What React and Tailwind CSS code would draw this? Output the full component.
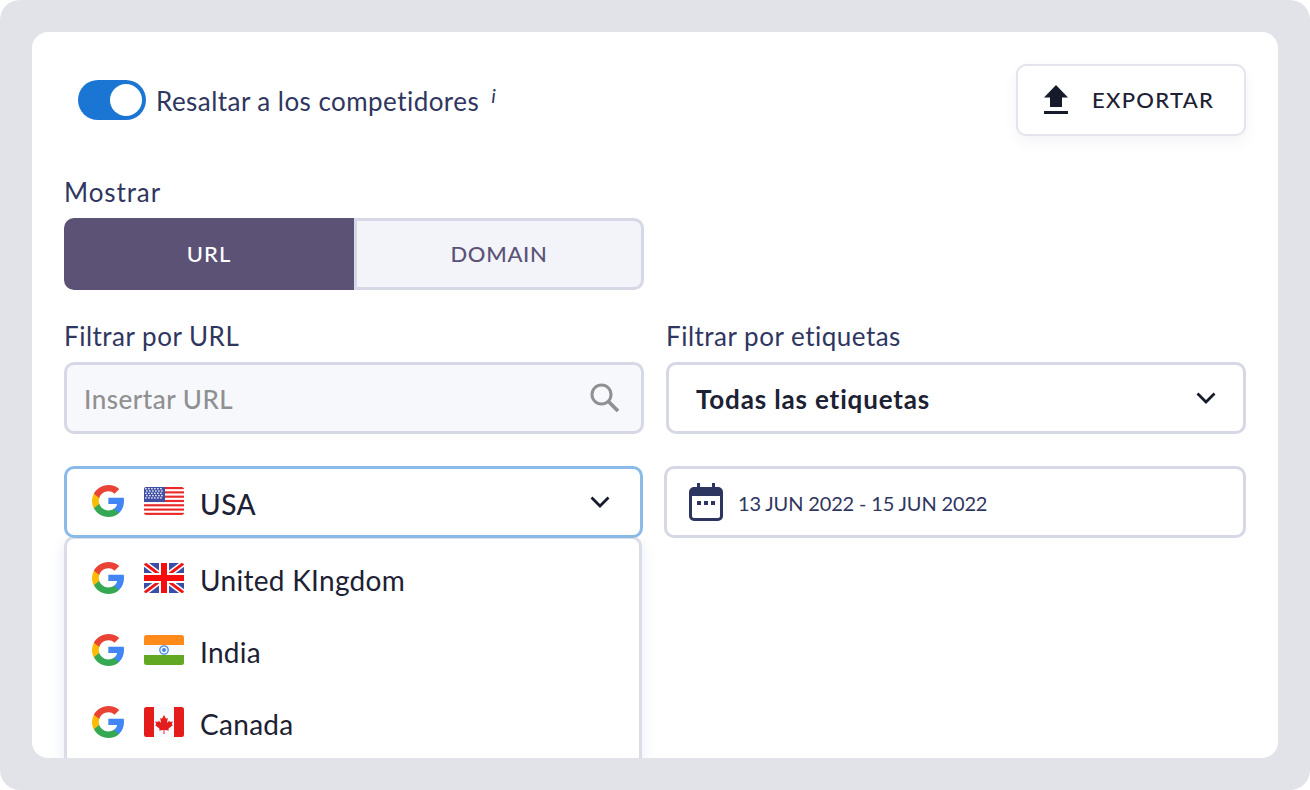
import React from "react";

const font = { fontFamily: "Lato, 'Noto Sans', sans-serif" };

function GoogleG() {
  return (
    <svg width="32" height="32" viewBox="2 3 43.100 43" className="shrink-0">
      <path fill="#4285F4" d="M45.100 24.500c0-1.600-.1-3.100-.4-4.500H24v8.500h11.800c-.5 2.700-2.100 5-4.400 6.600v5.500h7.100c4.200-3.800 6.600-9.500 6.600-16.100z" />
      <path fill="#34A853" d="M24 46c5.900 0 10.900-2 14.500-5.400l-7.100-5.500c-2 1.300-4.500 2.100-7.400 2.100-5.700 0-10.500-3.800-12.200-9H4.500v5.700C8.100 41.100 15.500 46 24 46z" />
      <path fill="#FBBC05" d="M11.800 28.700c-.4-1.300-.7-2.700-.7-4.200s.3-2.900.7-4.200v-5.700H4.500C3 17.600 2 21 2 24.500s1 6.900 2.500 9.900l7.300-5.700z" />
      <path fill="#EA4335" d="M24 11.300c3.200 0 6.100 1.100 8.400 3.300l6.300-6.300C34.900 4.800 29.900 3 24 3 15.500 3 8.100 7.900 4.500 14.600l7.300 5.700c1.700-5.200 6.500-9 12.200-9z" />
    </svg>
  );
}

function FlagUSA() {
  const stripes = [0, 2, 4, 6, 8, 10, 12];
  const stars = [];
  for (let r = 0; r < 5; r++) for (let c = 0; c < 6; c++) stars.push(<rect key={r + "-" + c} x={1.200 + c * 3 + (r % 2) * 1} y={1 + r * 2.300} width="1.400" height="1.400" fill="#fff" />);
  return (
    <svg width="40" height="28" viewBox="0 0 40 28" className="shrink-0">
      <defs><clipPath id="us"><rect width="40" height="28" rx="2.500" /></clipPath></defs>
      <g clipPath="url(#us)">
        <rect width="40" height="28" fill="#fff" />
        {stripes.map((s) => <rect key={s} y={s * 2.150} width="40" height="2.150" fill="#ea2a2a" />)}
        <rect width="21" height="15" fill="#3f4fa3" />
        {stars}
      </g>
    </svg>
  );
}

function FlagUK() {
  return (
    <svg width="40" height="30" viewBox="0 0 40 30" className="shrink-0">
      <defs><clipPath id="uk"><rect width="40" height="30" rx="2.500" /></clipPath></defs>
      <g clipPath="url(#uk)">
        <rect width="40" height="30" fill="#3b4ea6" />
        <path d="M0 0L40 30M40 0L0 30" stroke="#fff" strokeWidth="6" />
        <path d="M0 0L40 30M40 0L0 30" stroke="#f01515" strokeWidth="3" />
        <path d="M20 0V30M0 15H40" stroke="#fff" strokeWidth="10" />
        <path d="M20 0V30M0 15H40" stroke="#f60d0d" strokeWidth="6" />
      </g>
    </svg>
  );
}

function FlagIndia() {
  return (
    <svg width="40" height="30" viewBox="0 0 40 30" className="shrink-0">
      <defs><clipPath id="in"><rect width="40" height="30" rx="2.500" /></clipPath></defs>
      <g clipPath="url(#in)">
        <rect width="40" height="10" fill="#ff8a1c" />
        <rect y="10" width="40" height="10" fill="#f8fafd" />
        <rect y="20" width="40" height="10" fill="#62a823" />
        <circle cx="20" cy="15" r="4.200" fill="none" stroke="#3f86e8" strokeWidth="1.300" />
        <circle cx="20" cy="15" r="2" fill="#3f86e8" />
      </g>
    </svg>
  );
}

function FlagCanada() {
  return (
    <svg width="40" height="30" viewBox="0 0 40 30" className="shrink-0">
      <defs><clipPath id="ca"><rect width="40" height="30" rx="2.500" /></clipPath></defs>
      <g clipPath="url(#ca)">
        <rect width="40" height="30" fill="#f8fafd" />
        <rect width="10" height="30" fill="#e41c1c" />
        <rect x="30" width="10" height="30" fill="#e41c1c" />
        <path fill="#e41c1c" d="M20 8l-2 3.800-1.800-.9.800 5-2.300-2.400-.5 1.400-3-.5 1.100 3-1.300.7 4.600 3.700-.5 1.700 4.500-.6-.100 4h1l-.100-4 4.500.6-.5-1.700 4.600-3.700-1.300-.7 1.100-3-3 .5-.5-1.400-2.300 2.400.8-5-1.800.9z" />
      </g>
    </svg>
  );
}

function Chevron() {
  return (
    <svg width="20" height="12" viewBox="0 0 20 12" fill="none" className="shrink-0">
      <path d="M1.500 1.500L10 10L18.500 1.500" stroke="#161b2b" strokeWidth="2.800" />
    </svg>
  );
}

function Row({ flag, name }) {
  return (
    <div className="flex h-[72px] items-center pl-[25px]">
      <GoogleG />
      <span className="ml-[20px] flex">{flag}</span>
      <span className="ml-[16px] mt-[4px] text-[28px] tracking-[0.300px] text-[#1c2133]">{name}</span>
    </div>
  );
}

export default function App() {
  return (
    <div className="h-[790px] w-[1310px] overflow-hidden rounded-[20px] bg-[#e1e3e8] p-[32px]" style={font}>
      <div className="h-[726px] overflow-hidden rounded-[16px] bg-white px-[32px] pt-[32px]">
        <div className="flex h-[72px] items-center justify-between">
          <div className="flex items-center pl-[14px]">
            <div className="flex h-[40px] w-[68px] items-center justify-end rounded-full bg-[#1b76d3] pr-[4px]">
              <div className="h-[32px] w-[32px] rounded-full bg-white" />
            </div>
            <span className="ml-[10px] mt-[2px] text-[26px] tracking-[0.450px] text-[#2f3660]">Resaltar a los competidores</span>
            <span className="mb-[10px] ml-[12px] text-[20px] italic text-[#2f3660]">i</span>
          </div>
          <div className="flex h-[72px] w-[230px] items-center rounded-[10px] border-2 border-[#e3e4ec] bg-white pl-[25px] shadow-[0_6px_14px_rgba(60,70,120,0.06)]">
            <svg width="26" height="30" viewBox="0 0 26 30" className="shrink-0">
              <path fill="#161b2b" d="M13 0L25 12.500H19V22H7V12.500H1zM1 26H25V29H1z" />
            </svg>
            <span className="mb-[2px] ml-[23px] text-[22px] font-medium tracking-[1.300px] text-[#1c2133]">EXPORTAR</span>
          </div>
        </div>

        <div className="mt-[41px] text-[26px] leading-[30px] tracking-[0.900px] text-[#2f3660]">Mostrar</div>
        <div className="mt-[11px] flex h-[72px] w-[580px]">
          <div className="flex w-[290px] items-center justify-center rounded-l-[10px] bg-[#5b5276] pb-[2px] text-[22px] font-medium tracking-[1px] text-white">URL</div>
          <div className="flex w-[290px] items-center justify-center rounded-r-[10px] border-[3px] border-[#d6d8e5] bg-[#f3f4f9] pb-[2px] text-[22px] font-medium tracking-[0.700px] text-[#5b5276]">DOMAIN</div>
        </div>

        <div className="mt-[31px] grid grid-cols-[580px_580px] gap-x-[22px]">
          <div className="text-[26px] leading-[30px] tracking-[0.500px] text-[#2f3660]">Filtrar por URL</div>
          <div className="text-[26px] leading-[30px] tracking-[0.500px] text-[#2f3660]">Filtrar por etiquetas</div>

          <div className="mt-[11px] flex h-[72px] items-center justify-between rounded-[10px] border-[3px] border-[#d6d8e5] bg-[#f7f8fb] pl-[17px] pr-[20px]">
            <span className="mt-[2px] text-[26px] font-medium tracking-[0.500px] text-[#8f9092]">Insertar URL</span>
            <svg width="32" height="32" viewBox="0 0 32 32" fill="none" className="shrink-0">
              <circle cx="12.500" cy="12.500" r="9.500" stroke="#8f9092" strokeWidth="3" />
              <path d="M19.500 19.500L29 29" stroke="#8f9092" strokeWidth="3.800" />
            </svg>
          </div>
          <div className="mt-[11px] flex h-[72px] items-center justify-between rounded-[10px] border-[3px] border-[#d6d8e5] bg-white pl-[27px] pr-[27px]">
            <span className="mt-[2px] text-[26px] font-bold tracking-[0.850px] text-[#1c2133]">Todas las etiquetas</span>
            <Chevron />
          </div>

          <div className="relative mt-[32px] h-[72px]">
            <div className="relative z-10 mr-[1px] flex h-[72px] items-center rounded-[10px] border-[3px] border-[#8abbe8] bg-white pl-[25px] pr-[30px]">
              <span className="mb-[2px] flex"><GoogleG /></span>
              <span className="mb-[2px] ml-[20px] flex"><FlagUSA /></span>
              <span className="ml-[16px] mt-[3px] flex-1 text-[28px] font-medium tracking-[0.500px] text-[#1c2133]">USA</span>
              <Chevron />
            </div>
            <div className="absolute left-0 top-[70px] h-[300px] w-[578px] rounded-t-[10px] border-x-[3px] border-t-[3px] border-[#dadce8] bg-white pt-[3px] shadow-[0_4px_14px_rgba(100,120,180,0.15)]">
              <Row flag={<FlagUK />} name="United KIngdom" />
              <Row flag={<FlagIndia />} name="India" />
              <Row flag={<FlagCanada />} name="Canada" />
            </div>
          </div>
          <div className="ml-[-2px] mt-[32px] flex h-[72px] items-center rounded-[10px] border-[3px] border-[#d6d8e5] bg-white pl-[22px]">
            <svg width="34" height="38" viewBox="0 0 34 38" className="shrink-0">
              <path fill="#2c3560" d="M8 0h3v4h12V0h3v4h3a5 5 0 0 1 5 5v24a5 5 0 0 1-5 5H5a5 5 0 0 1-5-5V9a5 5 0 0 1 5-5h3z" />
              <path fill="#fff" d="M3 13h28v20a2 2 0 0 1-2 2H5a2 2 0 0 1-2-2z" />
              <path fill="#2c3560" d="M8 18h4v4H8zM15 18h4v4h-4zM22 18h4v4h-4z" />
            </svg>
            <span className="ml-[15px] mt-[1px] text-[20px] tracking-[-0.150px] text-[#2f3660]">13 JUN 2022 - 15 JUN 2022</span>
          </div>
        </div>
      </div>
    </div>
  );
}
